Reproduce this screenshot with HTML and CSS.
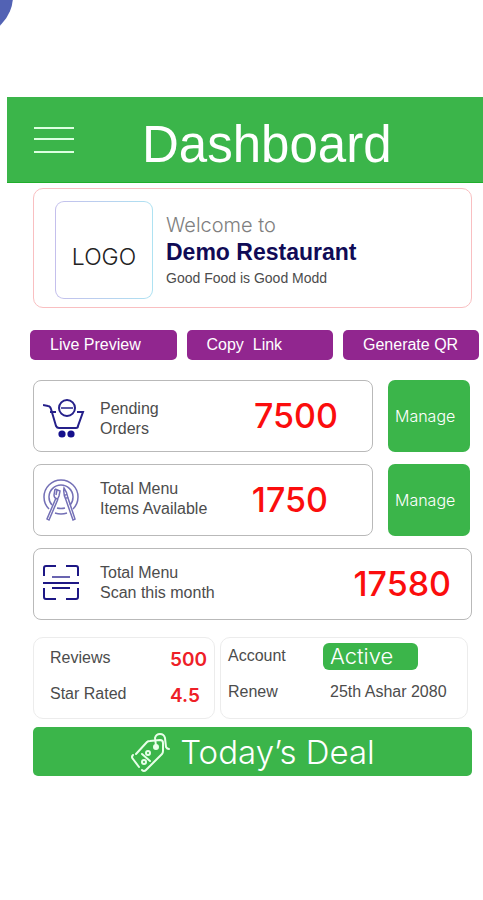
FILE: index.html
```html
<!DOCTYPE html>
<html lang="en">
<head>
<meta charset="utf-8">
<meta name="viewport" content="width=device-width, initial-scale=1">
<title>Dashboard</title>
<link rel="stylesheet" href="styles.css">
</head>
<body>
<div class="page">
  <div class="orb"></div>
  <header class="topbar">
    <button class="menu" type="button" aria-label="Menu">
      <svg width="40" height="30" viewBox="0 0 40 30" stroke="#dcffe0" stroke-width="2"><path d="M0 3h40M0 14h40M0 27h40"/></svg>
    </button>
    <h1>Dashboard</h1>
  </header>
  <main>
    <section class="welcome">
      <div class="logo"><span>LOGO</span></div>
      <div class="intro">
        <p class="hello">Welcome to</p>
        <h2>Demo Restaurant</h2>
        <p class="tagline">Good Food is Good Modd</p>
      </div>
    </section>

    <nav class="actions">
      <button type="button">Live Preview</button>
      <button type="button">Copy&nbsp; Link</button>
      <button type="button">Generate QR</button>
    </nav>

    <div class="stats">
      <div class="row">
        <section class="stat orders">
          <svg class="icon" width="44" height="44" viewBox="1 -4 44 44" fill="none" stroke="#25208a" stroke-width="2">
            <path d="M1 4l5 1q2 0 3 3l5 17q1 2 3 2h17q2 0 2-2l5-14h-6M8 11h6"/>
            <circle cx="25" cy="7" r="8"/><path d="M19 7h12" stroke-width="1.500"/>
            <g fill="#15108c" stroke="none"><circle cx="20" cy="33" r="3.600"/><circle cx="29" cy="33" r="3.600"/></g>
          </svg>
          <p class="label">Pending<br>Orders</p>
          <strong class="pending">7500</strong>
        </section>
        <button class="manage" type="button">Manage</button>
      </div>
      <div class="row">
        <section class="stat">
          <svg class="icon" width="44" height="44" viewBox="0 0 44 44" fill="none" stroke="#7470b6" stroke-width="1.500">
            <path d="M6 31A17 17 0 1 1 30 31M12 35q6 2 12 0M9 27a12 12 0 1 1 18 0M14 30q4 1 8 0"/>
            <path d="M12 11l-1 6q0 3 3 4M12 11l5 2-1 5q-1 3-2 3M14 12l-1 5M13 20L4 41l2 1L15 21M21 10q-1 6 2 12l7 20 2-1L25 20q-1-6-4-10zM21 18l3-2M22 21l3-2"/>
          </svg>
          <p class="label">Total Menu<br>Items Available</p>
          <strong class="items">1750</strong>
        </section>
        <button class="manage" type="button">Manage</button>
      </div>
      <section class="stat">
        <svg class="icon" width="44" height="44" viewBox="0 1 44 44" fill="none" stroke="#1d1785" stroke-width="2">
          <path d="M1 15V7q0-2 2-2h10M23 5h10q2 0 2 2v8M1 27v9q0 2 2 2h10M23 38h10q2 0 2-2v-9M0 22h36M9 27h18"/><path d="M9 16h18" stroke="#6964b0"/>
        </svg>
        <p class="label">Total Menu<br>Scan this month</p>
        <strong class="scans">17580</strong>
      </section>
    </div>

    <div class="details">
      <dl class="reviews">
        <dt>Reviews</dt><dd>500</dd>
        <dt>Star Rated</dt><dd>4.5</dd>
      </dl>
      <dl class="account">
        <dt>Account</dt><dd><span class="badge">Active</span></dd>
        <dt>Renew</dt><dd>25th Ashar 2080</dd>
      </dl>
    </div>

    <button class="deal" type="button">
      <svg width="40" height="40" viewBox="0 0 40 40" fill="none" stroke="#e8ffe9" stroke-width="2" stroke-linecap="round" stroke-linejoin="round">
        <path d="M6 22L17 10q1-1 3-1l10-1q3 0 3 3l0 8q0 2-1 3L16 38q-2 2-4 0M9 35L3 27q-2-2 0-4"/>
        <circle cx="26" cy="15" r="2" fill="#e8ffe9"/>
        <path d="M26 14L25 6q1-4 5-4t5 4l1 9q1 2 3 2"/>
        <path d="M12 22l8 7"/><circle cx="18" cy="21" r="2"/><circle cx="14" cy="30" r="2"/>
      </svg>
      <span>Today’s Deal</span>
    </button>
  </main>
</div>
</body>
</html>
```
FILE: styles.css
```css
* { box-sizing: border-box; }
body {
  margin: 0;
  background: #fff;
  color: #4c4c4c;
  font: 16px/20px "Liberation Sans", Arial, sans-serif;
}
h1, h2, p, dl, dd { margin: 0; }
button { border: 0; font: inherit; color: #fff; cursor: pointer; }
svg { display: block; flex: none; }

.page {
  position: relative;
  min-height: 100vh;
  padding-top: 97px;
  overflow: hidden;
}
.orb {
  position: absolute;
  top: -44px;
  left: -67px;
  width: 80px;
  height: 80px;
  border-radius: 50%;
  background: #5262b4;
}
.topbar {
  display: flex;
  align-items: center;
  gap: 68px;
  height: 86px;
  margin-left: 7px;
  padding-left: 27px;
  background: #3bb54a;
  border-bottom: 1px solid #1fae2b;
}
.menu { padding: 0; background: none; }
h1 { color: #fff; font-size: 51px; font-weight: 400; line-height: 60px; padding-top: 11px; }

main { padding: 5px 11px 0 33px; }

.welcome {
  display: flex;
  align-items: center;
  gap: 13px;
  height: 120px;
  padding: 4px 0 0 21px;
  border: 1px solid #f9bfc1;
  border-radius: 10px;
}
.logo {
  display: grid;
  place-items: center;
  width: 98px;
  height: 98px;
  padding-top: 13px;
  border: 1px solid transparent;
  border-radius: 9px;
  background: linear-gradient(#fff, #fff) padding-box, linear-gradient(90deg, #c4bfec, #aee2f2) border-box;
  color: #222;
  font: 300 23px/26px Inter, sans-serif;
}
.intro { padding-top: 2px; }
.hello { color: #808080; font: 300 20px/26px Inter, sans-serif; }
h2 { color: #100b56; font-size: 23px; line-height: 28px; }
.tagline { font-size: 14px; line-height: 24px; }

.actions {
  display: grid;
  grid-template-columns: 1fr 1fr 136px;
  gap: 10px;
  margin: 22px -7px 0 -3px;
}
.actions button {
  height: 30px;
  padding: 0 0 0 20px;
  border-radius: 5px;
  background: #91268f;
  text-align: left;
}

.stats { display: grid; gap: 12px; margin-top: 20px; }
.row { display: grid; grid-template-columns: 1fr 82px; gap: 15px; padding-right: 2px; }
.stat {
  display: flex;
  align-items: center;
  height: 72px;
  padding-left: 9px;
  border: 1px solid #b9b9b9;
  border-radius: 8px;
}
.stat.orders { padding-top: 6px; }
.label { margin-left: 13px; padding-bottom: 2px; }
.orders .label { padding-bottom: 0; }
.stat strong {
  margin-left: auto;
  color: #fb0d0d;
  font: 500 34px/40px Inter, sans-serif;
}
.stat .pending { padding: 0 34px 6px 0; }
.items { padding-right: 44px; }
.scans { padding-right: 20px; }
.manage {
  padding: 0 0 0 7px;
  border-radius: 7px;
  background: #3bb54a;
  font: 300 16px/20px Inter, sans-serif;
  text-align: left;
}

.details {
  display: grid;
  grid-template-columns: 182fr 248fr;
  gap: 5px;
  margin-top: 17px;
  padding-right: 4px;
}
.details dl {
  display: grid;
  align-content: start;
  align-items: center;
  grid-template-rows: 36px 36px;
  height: 82px;
  border: 1px solid #ececec;
  border-radius: 10px;
}
.reviews { grid-template-columns: 1fr 44px; padding: 2px 0 0 16px; }
.reviews dd { padding-top: 3px; color: #ee2027; font: 600 19px/24px Inter, sans-serif; }
.account { grid-template-columns: 95px 1fr; padding: 0 0 0 7px; }
.account dd { padding-left: 7px; }
.badge {
  display: block;
  width: 95px;
  margin-left: -7px;
  padding-left: 7px;
  border-radius: 6px;
  background: #3bb54a;
  color: #fff;
  font: 300 22px/27px Inter, sans-serif;
}

.deal {
  display: flex;
  align-items: center;
  justify-content: center;
  gap: 10px;
  width: 100%;
  height: 49px;
  margin-top: 8px;
  padding: 0;
  border-radius: 5px;
  background: #3bb54a;
  font: 300 33px/40px Inter, sans-serif;
}
```
